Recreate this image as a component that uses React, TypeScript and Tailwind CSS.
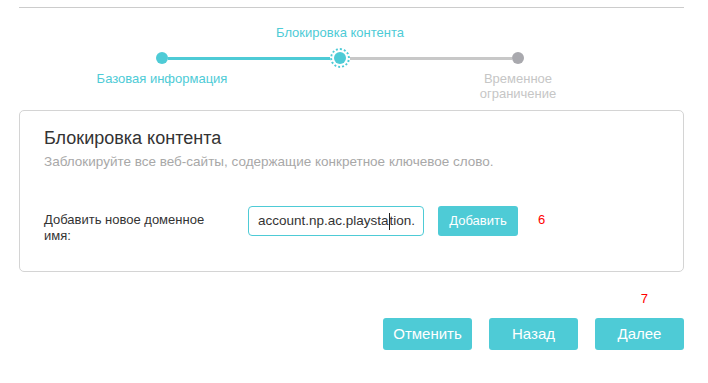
const teal = "bg-[#4ecbd6]"

const Step = ({
  top,
  bottom,
  state,
  left,
  right,
}: {
  top?: string
  bottom?: string[]
  state: "done" | "current" | "todo"
  left?: "teal" | "gray"
  right?: "teal" | "gray"
}) => {
  const line = (c?: "teal" | "gray") =>
    c ? (c === "teal" ? "bg-[#4ecbd6]" : "bg-[#c8c8c8]") : "bg-transparent"
  return (
    <div className="flex flex-col items-center w-[178px]">
      <div className="h-[16px] text-[13px] leading-[16px] text-[#4ecbd6] whitespace-nowrap">
        {top}
      </div>
      <div className="flex items-center w-full h-[22px] mt-[6px]">
        <div className={`flex-1 h-[3px] ${line(left)}`} />
        {state === "current" ? (
          <div className="w-[20px] h-[20px] rounded-full border-2 border-dotted border-[#4ecbd6] flex items-center justify-center">
            <div className="w-[12px] h-[12px] rounded-full bg-[#4ecbd6]" />
          </div>
        ) : (
          <div
            className={`w-[12px] h-[12px] rounded-full ${
              state === "done" ? "bg-[#4ecbd6]" : "bg-[#a9a9ae]"
            }`}
          />
        )}
        <div className={`flex-1 h-[3px] ${line(right)}`} />
      </div>
      <div
        className={`mt-[2px] text-[13px] leading-[15px] text-center whitespace-nowrap ${
          state === "todo" ? "text-[#c6c6c6]" : "text-[#4ecbd6]"
        }`}
      >
        {bottom?.map((b) => (
          <div key={b}>{b}</div>
        ))}
      </div>
    </div>
  )
}

const App = () => {
  return (
    <div className="w-[708px] h-[383px] bg-white overflow-hidden font-['Liberation_Sans',Arial,sans-serif] text-[#333333]">
      <div className="ml-[19px] mt-[7px] w-[665px] h-px bg-[#cccccc]" />

      {/* Stepper */}
      <div className="flex ml-[73px] mt-[17px] h-[85px]">
        <Step state="done" bottom={["Базовая информация"]} right="teal" />
        <Step state="current" top="Блокировка контента" left="teal" right="gray" />
        <Step state="todo" bottom={["Временное", "ограничение"]} left="gray" />
      </div>

      {/* Card */}
      <div className="ml-[19px] w-[665px] h-[162px] border border-[#d4d4d4] rounded-[5px] px-6 pt-[16px]">
        <h2 className="text-[18px] leading-[22px] text-[#333333]">
          Блокировка контента
        </h2>
        <p className="mt-[4px] text-[13.5px] leading-[18px] text-[#a8a8a8]">
          Заблокируйте все веб-сайты, содержащие конкретное ключевое слово.
        </p>

        <div className="flex items-start mt-[35px]">
          <label className="w-[204px] mt-[6px] text-[13px] leading-[16px] text-[#333333]">
            Добавить новое доменное
            <br />
            имя:
          </label>
          <div className="w-[176px] h-[30px] border border-[#4ecbd6] rounded-[4px] flex items-center pl-[9px] text-[13.5px] text-[#333333] whitespace-nowrap overflow-hidden">
            account.np.ac.playsta
            <span className="inline-block w-px h-[17px] bg-[#222222]" />
            tion.
          </div>
          <button
            type="button"
            className={`ml-[14px] w-[80px] h-[30px] rounded-[3px] ${teal} text-white text-[13px]`}
          >
            Добавить
          </button>
          <span className="ml-[20px] mt-[6px] text-[13px] leading-[16px] text-[#ff0000]">
            6
          </span>
        </div>
      </div>

      {/* Footer */}
      <div className="flex flex-col items-end w-[684px] mt-[19px]">
        <span className="mr-[36px] text-[13px] leading-[15px] text-[#ff0000]">7</span>
        <div className="flex gap-[17px] mt-[12px]">
          {["Отменить", "Назад", "Далее"].map((t) => (
            <button
              key={t}
              type="button"
              className={`w-[89px] h-[32px] rounded-[3px] ${teal} text-white text-[15px]`}
            >
              {t}
            </button>
          ))}
        </div>
      </div>
    </div>
  )
}

export default App
